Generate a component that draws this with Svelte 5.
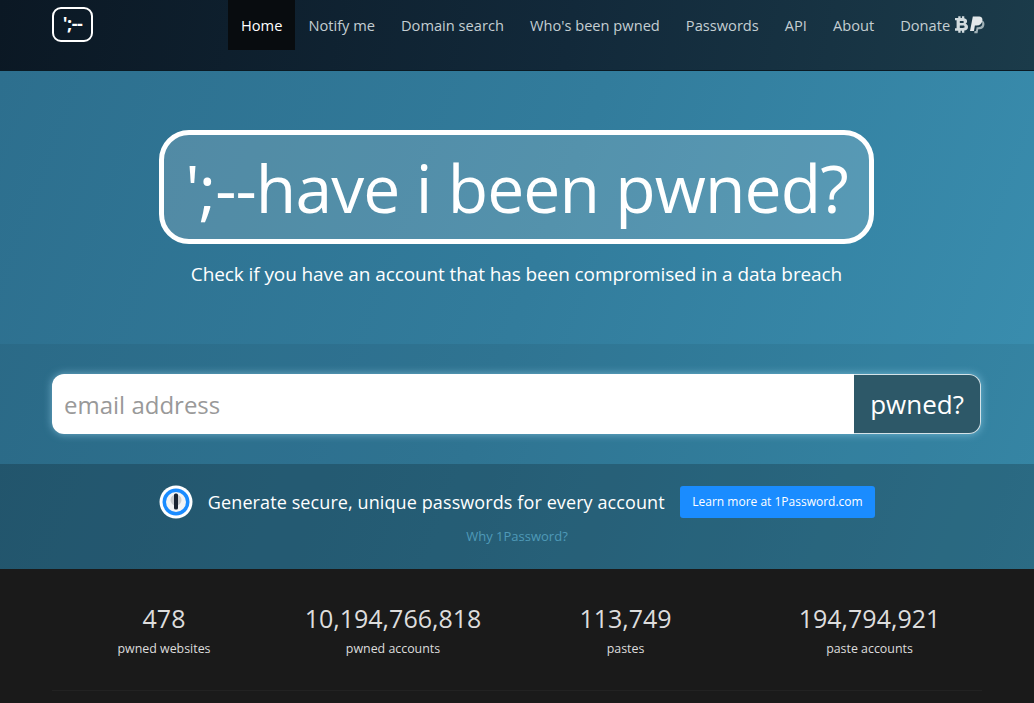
<script lang="ts">
  const links = ["Home", "Notify me", "Domain search", "Who's been pwned", "Passwords", "API", "About"];
  const stats = [
    { value: "478", label: "pwned websites" },
    { value: "10,194,766,818", label: "pwned accounts" },
    { value: "113,749", label: "pastes" },
    { value: "194,794,921", label: "paste accounts" }
  ];
</script>

<div class="page">
  <header class="navbar">
    <div class="logo">';--</div>
    <nav>
      {#each links as link, i}
        <a href="#top" class:active={i === 0}>{link}</a>
      {/each}
      <a href="#top" class="donate">
        Donate
        <svg class="btc" viewBox="0 0 14 18" width="13" height="17" aria-hidden="true">
          <path fill-rule="evenodd" fill="#d3dcdf" d="M3.500 0h2.500v2h1.500V0H10v2.200c2 .4 3 1.600 3 3.200 0 1.200-.6 2.200-1.600 2.800 1.600.5 2.600 1.700 2.600 3.400 0 2.200-1.600 3.600-4 3.900V18H7.500v-2.400H6V18H3.500v-2.400H0v-2.500h1.700V4.500H0V2h3.500zM5.200 5.200v2.300h3c.9 0 1.300-.5 1.300-1.150S9.100 5.200 8.200 5.200zm0 5v2.600h3.500c1.100 0 1.600-.5 1.600-1.300s-.5-1.300-1.600-1.300z" />
        </svg>
        <svg class="pp" viewBox="0 0 16 18" width="15" height="18" aria-hidden="true">
          <path fill="#9fb0b6" d="M13.500 4.500c1.800 1 2.200 2.800 1.700 5-.6 2.700-2.400 4-5 4H8.800l-.8 4.300H4.500l.4-2.300h1.400l.8-4.200h1.600c3.200 0 5.300-1.500 4-6.800z" />
          <path fill="#e3e8ea" d="M3 0h6c3 0 4.800 1.500 4.200 4.500-.6 3.300-2.800 5-6 5H5.200l-1 6H0z" />
        </svg>
      </a>
    </nav>
  </header>

  <div class="blue">
    <section class="hero">
      <h1>';--have i been pwned?</h1>
      <p>Check if you have an account that has been compromised in a data breach</p>
    </section>

    <section class="search">
      <div class="search-box">
        <input type="text" placeholder="email address" />
        <button>pwned?</button>
      </div>
    </section>

    <section class="promo">
      <div class="promo-row">
        <svg class="onepw" viewBox="0 0 34 34" width="34" height="34" aria-hidden="true">
          <circle cx="17" cy="17" r="16.500" fill="#fff" />
          <circle cx="17" cy="17" r="13.500" fill="#1a8cff" />
          <circle cx="17" cy="17" r="10" fill="#f2f4f5" />
          <circle cx="17" cy="15" r="5.500" fill="#c9ccce" />
          <rect x="15" y="8.500" width="4" height="16" rx="1.500" fill="#1a2430" />
        </svg>
        <span>Generate secure, unique passwords for every account</span>
        <a class="learn" href="#top">Learn more at 1Password.com</a>
      </div>
      <a class="why" href="#top">Why 1Password?</a>
    </section>
  </div>

  <section class="stats">
    <div class="stats-row">
      {#each stats as s}
        <div class="stat">
          <div class="value">{s.value}</div>
          <div class="label">{s.label}</div>
        </div>
      {/each}
    </div>
    <hr />
  </section>
</div>

<style>
  :global(body) {
    margin: 0;
    background: #1a1a1a;
    overflow: hidden;
  }
  .page {
    font-family: "Open Sans", "Noto Sans", sans-serif;
    height: 703px;
    overflow: hidden;
  }
  .navbar {
    height: 71px;
    box-sizing: border-box;
    border-bottom: 1px solid #0a1a24;
    background: linear-gradient(100deg, #0b1824 0%, #12293a 55%, #1b3b4a 100%);
    display: flex;
    align-items: flex-start;
    padding-left: 52px;
  }
  .logo {
    width: 41px;
    height: 35px;
    box-sizing: border-box;
    margin-top: 7px;
    border: 2px solid #fff;
    border-radius: 9px;
    color: #fff;
    font-size: 18px;
    font-weight: 700;
    line-height: 28px;
    text-align: center;
    letter-spacing: -0.5px;
  }
  nav {
    display: flex;
    margin-left: 135px;
  }
  nav a {
    display: flex;
    align-items: center;
    height: 50px;
    padding: 0 13px;
    font-size: 14.650px;
    color: #c4ced2;
    text-decoration: none;
  }
  nav a.active {
    background: #080c0f;
    color: #fff;
  }
  .donate {
    gap: 2px;
  }
  .btc {
    margin: -1px 0 0 3px;
  }
  .pp {
    margin-top: -1px;
  }
  .blue {
    background: linear-gradient(110deg, #2d6f8e 0%, #327c9c 50%, #3a8fb0 100%);
  }
  .hero {
    height: 273px;
    box-sizing: border-box;
    padding: 59px 1px 0 0;
    display: flex;
    flex-direction: column;
    align-items: center;
    color: #fff;
  }
  h1 {
    margin: 0;
    box-sizing: border-box;
    width: 715px;
    height: 114px;
    border: 5px solid #fff;
    border-radius: 30px;
    background: rgba(255, 255, 255, 0.17);
    font-size: 66px;
    font-weight: 400;
    line-height: 104px;
    text-align: center;
    white-space: nowrap;
    letter-spacing: -0.9px;
  }
  .hero p {
    margin: 17px 0 0;
    font-size: 19px;
    line-height: 26px;
    letter-spacing: -0.1px;
  }
  .search {
    height: 120px;
    box-sizing: border-box;
    padding: 30px 53px 0 52px;
    background: rgba(0, 0, 0, 0.06);
  }
  .search-box {
    display: flex;
    height: 60px;
    border-radius: 12px;
    box-shadow: 0 0 8px rgba(160, 220, 245, 0.6);
  }
  input {
    flex: 1;
    min-width: 0;
    border: 0;
    outline: 0;
    padding: 0 12px;
    border-radius: 12px 0 0 12px;
    background: #fff;
    font-family: inherit;
    font-size: 24px;
  }
  input::placeholder {
    color: #999;
    opacity: 1;
  }
  button {
    width: 127px;
    border: 1px solid #d5e3e8;
    border-left: 0;
    border-radius: 0 12px 12px 0;
    background: #2d5868;
    color: #fff;
    font-family: inherit;
    font-size: 26px;
    padding: 0;
  }
  .promo {
    height: 105px;
    box-sizing: border-box;
    padding-top: 21px;
    background: rgba(0, 0, 0, 0.25);
    display: flex;
    flex-direction: column;
    align-items: center;
  }
  .promo-row {
    display: flex;
    align-items: center;
    color: #fff;
    font-size: 18px;
    height: 34px;
  }
  .promo-row span {
    margin-left: 15px;
    letter-spacing: 0.1px;
  }
  .learn {
    margin-left: 15px;
    height: 32px;
    line-height: 32px;
    padding: 0 12.500px;
    border-radius: 3px;
    background: #1a8cff;
    color: #fff;
    font-size: 12px;
    text-decoration: none;
  }
  .why {
    margin-top: 8px;
    color: #4f9ab8;
    font-size: 13px;
    text-decoration: none;
  }
  .stats {
    height: 134px;
    box-sizing: border-box;
    padding: 32px 44px 0;
    background: #1a1a1a;
  }
  .stats-row {
    display: grid;
    grid-template-columns: 240px 218px 247px 241px;
    text-align: center;
  }
  .value {
    color: #ddd;
    font-size: 25px;
    line-height: 34px;
  }
  .label {
    color: #ddd;
    font-size: 12.400px;
    line-height: 24px;
    margin-top: 2px;
  }
  hr {
    margin: 29px 8px 0;
    border: 0;
    border-top: 1px solid #222;
  }
</style>
